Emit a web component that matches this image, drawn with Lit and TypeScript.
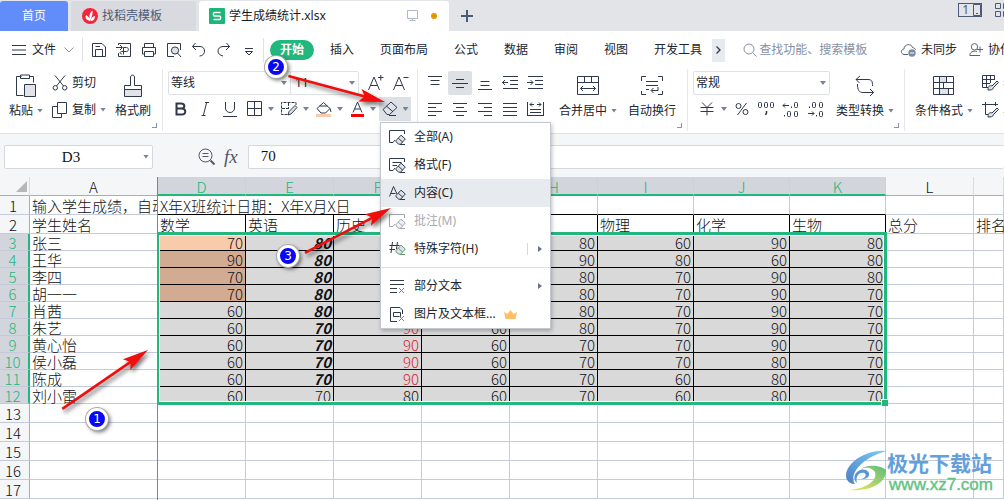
import { LitElement, html, svg, css, nothing } from "lit";
import { customElement, property } from "lit/decorators.js";
import { classMap } from "lit/directives/class-map.js";

type Glyph = { w: number; h: number; body: unknown };

const eraser = (x: number, y: number) => svg`
  <g transform="translate(${x} ${y})">
    <path d="M1 6.5 6 1.2 10.3 5 5.6 10.2H3.8L1 7.8Z" fill="#dfe2e8" />
    <path d="M3.3 4.2 7.8 8.2M5 10.5H10" />
  </g>`;

const glyphs: Record<string, Glyph> = {
  menu: { w: 14, h: 12, body: svg`<path d="M0 1.5H14M0 6H14M0 10.5H14" />` },
  chevron: { w: 10, h: 6, body: svg`<path d="M.5.5 5 5 9.5.5" stroke="#8d94a3" />` },
  save: { w: 16, h: 16, body: svg`<path d="M1.5 1.5H11L14.5 5V14.5H1.5ZM4.5 14V7.5H11.5V14M4.5 4.5H9" />` },
  exportPdf: { w: 16, h: 16, body: svg`<path d="M2.5 3V1.5H14.5V14.5H2.5V11M0 5.5H6M4 3 6.5 5.5 4 8M7.5 12.500V5.5H10.500C13 5.5 13 9.5 10.500 9.5H6C3.500 9.5 3.500 12 6 12" />` },
  print: { w: 16, h: 16, body: svg`<path d="M3.5 5V1.5H12.5V5M3.5 12H1.500V5.5H14.500V12H12.5M3.5 9.5H12.5V14.5H3.5Z" />` },
  preview: { w: 16, h: 16, body: svg`<path d="M14.5 8V1.5H1.5V14.5H8" /><circle cx="9" cy="8.5" r="3.6" fill="#dfe2e8" /><path d="m11.5 11 3.5 4" />` },
  undo: { w: 16, h: 16, body: svg`<path d="M4.5 1 1.5 4.500 5 8M1.500 4.500H9C12 4.500 13.500 6.500 13.500 9S12 14 8.500 14" />` },
  redo: { w: 16, h: 16, body: svg`<path d="M10.500 1 13.500 4.500 10 8M13.500 4.500H7C4 4.500 2 6.500 2 9S4 13.500 7 14" />` },
  more: { w: 16, h: 16, body: svg`<path d="M4 6.500H12M4.500 9.500 8 13 11.500 9.500Z" />` },
  search: { w: 14, h: 14, body: svg`<circle cx="6" cy="6" r="5" stroke="#8b93a3" /><path d="m9.500 9.500 4 4" stroke="#8b93a3" />` },
  cloud: { w: 17, h: 14, body: svg`<path d="M8 11.500H4C.500 11 .500 6.500 4 6 4 1 11.500 0 12.500 4.500 14.500 5 15.500 6 15.500 7" stroke="#5b6577" /><circle cx="12" cy="10" r="3.700" fill="#7c8aa5" stroke="none" /><path d="M10 10H14" stroke="#fff" />` },
  person: { w: 14, h: 14, body: svg`<circle cx="5.500" cy="3.800" r="3.200" stroke="#5b6577" /><path d="M8 8.500C4 7.500 1 9 .800 12.500H11M8 6.500H14M11 3.500V9.500" stroke="#5b6577" />` },
  paste: { w: 22, h: 24, body: svg`<path d="M6.500 2.500H1.500V21.500H8.500M14.500 2.500H18.500V8.500M5.500 1H14.500V4.500H5.500Z" /><path d="M9.500 10.500H20.500V22.500H9.500Z" fill="#e1e3e8" />` },
  cut: { w: 16, h: 16, body: svg`<path d="M3 .500 11.500 11M13 .500 4.500 11" /><circle cx="3.300" cy="12.800" r="2.200" /><circle cx="12.700" cy="12.800" r="2.200" />` },
  copy: { w: 16, h: 16, body: svg`<path d="M5.500 .500H14.500V11.500H5.500ZM5 4.500H.500V15.500H9.500V12" />` },
  brush: { w: 20, h: 24, body: svg`<path d="M1.500 11.500H7.500V3C7.500.500 11.500.500 11.500 3V11.500H18.500V16H1.500Z" fill="#fff" /><path d="M1.500 15.500H18.500V22.500H1.500Z" fill="#e1e3e8" />` },
  growFont: { w: 16, h: 16, body: svg`<path d="M.500 15 6 2 11.500 15M2.500 10.500H9.500M10 2.500H15.500M12.800 0V5.500" />` },
  shrinkFont: { w: 16, h: 16, body: svg`<path d="M.500 15 6 2 11.500 15M2.500 10.500H9.500M10.500 2.500H15.500" />` },
  bold: { w: 12, h: 14, body: svg`<path d="M1.500 1.500H6C10.500 1.500 10.500 6.500 6 6.500H1.500ZM1.500 6.500H6.500C11.500 6.500 11.500 12.500 6.500 12.500H1.500Z" stroke-width="2" />` },
  italic: { w: 10, h: 14, body: svg`<path d="M6.500 1 3.500 13M5 .500H9M1.500 13.500H5.500" />` },
  underline: { w: 15, h: 15, body: svg`<path d="M2.500 0V6C2.500 12 11.500 12 11.500 6V0M0 14.500H14" />` },
  borders: { w: 16, h: 16, body: svg`<path d="M.500.500H14.500V14.500H.500ZM7.500.500V14.500M.500 7.500H14.500" />` },
  drawBorder: { w: 17, h: 16, body: svg`<path d="M15 4V1.500H.500V13.500H7M7.500 2V7M1 7.500H9" stroke-dasharray="3 1" /><path d="M7 14 8 10.500 14 4.500 16 6.500 10 13Z" fill="#dfe2e8" />` },
  bucket: { w: 17, h: 17, body: svg`<path d="M2 7.500 8.500 1.500 15 7.500 10.500 12H6ZM4.500 5H12.500M15 7.500 16 11" /><path d="M1 13H16V16H1Z" fill="#f8cbad" stroke="none" />` },
  fontColor: { w: 15, h: 17, body: svg`<path d="M3 11.500 7.500 1 12 11.500M4.500 8H10.500" /><path d="M1 14.500H14" stroke="red" stroke-width="3" />` },
  eraser: { w: 16, h: 16, body: svg`<path d="M1 8.500 9 1 15 6.500 7.500 13.500H5Z" fill="#dfe2e8" /><path d="M4.500 5.200 11 10.700M7 14.500H14" />` },
  top: { w: 16, h: 16, body: svg`<path d="M1 1.500H15M3.500 5.500H12.500M3.500 9.500H12.500" />` },
  middle: { w: 16, h: 16, body: svg`<path d="M4 4.500H12M0 8.500H16M4 12.500H12" />` },
  bottom: { w: 16, h: 16, body: svg`<path d="M3.500 6.500H12.500M3.500 10.500H12.500M1 14.500H15" />` },
  outdent: { w: 17, h: 16, body: svg`<path d="M1 1.500H16M8 5.500H16M8 9.500H16M1 13.500H16M0 7.500H6M3 5 .500 7.500 3 10" />` },
  indent: { w: 17, h: 16, body: svg`<path d="M1 1.500H16M8 5.500H16M8 9.500H16M1 13.500H16M0 7.500H6M3.500 5 6 7.500 3.500 10" />` },
  left: { w: 16, h: 16, body: svg`<path d="M1 2.500H15M1 6.500H9M1 10.500H15M1 14.500H9" />` },
  center: { w: 16, h: 16, body: svg`<path d="M1 2.500H15M4 6.500H12M1 10.500H15M4 14.500H12" />` },
  right: { w: 16, h: 16, body: svg`<path d="M1 2.500H15M7 6.500H15M1 10.500H15M7 14.500H15" />` },
  justify: { w: 16, h: 16, body: svg`<path d="M1 2.500H15M1 6.500H15M1 10.500H15M1 14.500H15" />` },
  distribute: { w: 17, h: 16, body: svg`<path d="M.500 1V15M16.500 1V15M3 3.500H7M5 1.500 3 3.500 5 5.500M10 3.500H14M12 1.500 14 3.500 12 5.500M3 8.500H14M3 11.500H14M1 14.500H16" />` },
  merge: { w: 22, h: 20, body: svg`<path d="M.500.500H21.500V18.500H.500ZM.500 6.500H21.500M7.500.500V6.500M14.500.500V6.500M3.500 12.500H18.500M6 10 3.500 12.500 6 15M16 10 18.500 12.500 16 15" />` },
  wrap: { w: 22, h: 20, body: svg`<path d="M.500 5V.500H5M17 .500H21.500V5M21.500 15V18.500H17M5 18.500H.500V15M5 5.500H17M5 9.500H17M5 13.500H8M17 11V14.500H10.500M12.500 12 10 14.500 12.500 17" />` },
  yen: { w: 14, h: 14, body: svg`<path d="M2 .500 7 5.500 12 .500M.500 5.500H13.500M.500 9.500H13.500M7 5.500V13.500" />` },
  percent: { w: 14, h: 14, body: svg`<circle cx="3.500" cy="4" r="2.500" /><circle cx="10.500" cy="10" r="2.500" /><path d="M11.500 1 2.500 13" />` },
  thousands: { w: 18, h: 16, body: svg`<rect x="1.500" y="1.500" width="3" height="5" rx="1" /><rect x="7.500" y="1.500" width="3" height="5" rx="1" /><rect x="13.500" y="1.500" width="3" height="5" rx="1" /><path d="M9.500 10V12L8.500 14" stroke-width="1.500" />` },
  addDecimal: { w: 17, h: 16, body: svg`<path d="M1 4.500H7M3 2.500 1 4.500 3 6.500M9.500 5.500V7M2.500 14V15.500" /><rect x="12.500" y="1.500" width="3" height="5" rx="1" /><rect x="5.500" y="10.500" width="3" height="5" rx="1" /><rect x="12.500" y="10.500" width="3" height="5" rx="1" />` },
  cutDecimal: { w: 17, h: 16, body: svg`<path d="M1 12.500H7M5 10.500 7 12.500 5 14.500M2.500 5.500V7M9.500 14V15.500" /><rect x="5.500" y="1.500" width="3" height="5" rx="1" /><rect x="12.500" y="1.500" width="3" height="5" rx="1" /><rect x="12.500" y="10.500" width="3" height="5" rx="1" />` },
  convert: { w: 20, h: 22, body: svg`<path d="M1 4.500H13C17 4.500 17.500 6.500 17.500 11M5 1 1 4.500 4.500 8M2.500 9C2.500 15 4 17.500 8 17.500H18.500M15 14 18.500 17.500 15 21" />` },
  condition: { w: 22, h: 20, body: svg`<path d="M7 1H14V7H7ZM7 13H15V18H7Z" fill="#dfe2e8" stroke="none" /><path d="M.500.500H20.500V18.500H.500ZM.500 6.500H20.500M.500 12.500H20.500M6.500.500V18.500M13.500.500V6.500M10.500 6.500V12.500M15.500 12.500V18.500" />` },
  tableStyle: { w: 17, h: 16, body: svg`<path d="M12.500 5V.500H.500V12.500H6M.500 4.500H12.500M.500 8.500H8M4.500.500V12.500M8.500.500V8" /><path d="M6 15C6 11 8 10 10 11L15 6 16.500 7.500 11.500 12.500C11 15 9 15 6 15Z" fill="#dfe2e8" />` },
  cellStyle: { w: 17, h: 16, body: svg`<path d="M0 2.500H16M3.500 0V12.500H6M13.500 0V4" /><path d="M6 15C6 11 8 10 10 11L15 6 16.500 7.500 11.500 12.500C11 15 9 15 6 15Z" fill="#dfe2e8" />` },
  zoomOut: { w: 18, h: 18, body: svg`<circle cx="7.500" cy="7.500" r="6.500" stroke="#4e586b" /><path d="M4.500 5.500H10.500M4.500 8.500H10.500" stroke="#4e586b" /><path d="m12.500 12.500 4 4" stroke="#4e586b" stroke-width="2" />` },
  monitor: { w: 12, h: 12, body: svg`<path d="M.500.500H10.500V8.500H.500ZM5.500 8.500V10.500M2.500 10.500H8.500" stroke="#b0b8cc" />` },
  plus: { w: 12, h: 12, body: svg`<path d="M0 6H12M6 0V12" stroke="#4b5a76" stroke-width="2" />` },
  grid: { w: 14, h: 14, body: svg`<path d="M.500.500H5.500V5.500H.500ZM8.500.500H13.500V5.500H8.500ZM.500 8.500H5.500V13.500H.500ZM8.500 8.500H13.500V13.500H8.500Z" stroke="#4b5a76" />` },
  phone: { w: 8, h: 12, body: svg`<path d="M.500.500H7.500V11.500H.500ZM3 9.500H5" stroke="#4b5a76" />` },
  clearAll: { w: 17, h: 17, body: svg`<path d="M15.500 5V1.500H.500V13.500H4L6 11" />${eraser(6, 5)}` },
  clearFormat: { w: 17, h: 17, body: svg`<path d="M15.500 5V1.500H.500V13.500H4L6 11M3.500 5.500H12.500M3.500 8.500H8" />${eraser(6, 5)}` },
  clearContent: { w: 17, h: 17, body: svg`<path d="M.500 11.500 4.500 1.500 8 9M2 8.500H6.500" />${eraser(6, 4)}` },
  clearSpecial: { w: 17, h: 17, body: svg`<path d="M3.500 1 2 12M8.500 1 7.500 8M.500 4.500H10.500M.500 8.500H6" /><g stroke="#5f9a72">${eraser(6, 3)}</g>` },
  partText: { w: 17, h: 17, body: svg`<path d="M1 2.500H15M1 6.500H15M1 10.500H8M1 14.500H8" /><path class="cross" d="m10 10 5 5M15 10l-5 5" style="stroke:#d9575b" />` },
  pictureBox: { w: 17, h: 17, body: svg`<path d="M13.500 8V4L11 1.500H1.500V15.500H8M4.500 6.500H11.500V10.500H4.500Z" /><path class="cross" d="m10 10 5 5M15 10l-5 5" style="stroke:#d9575b" />` },
};

const icon = (name: string) => {
  const g = glyphs[name];
  return svg`<svg class="icon" width=${g.w} height=${g.h} viewBox="0 0 ${g.w} ${g.h}" fill="none" stroke="#2f394b" aria-hidden="true">${g.body}</svg>`;
};

const shared = css`
  :host, * { box-sizing: border-box; }
  button, select, input {
    font: inherit; color: inherit; background: none; border: 0; margin: 0; padding: 0;
    outline: 0; border-radius: 0; appearance: none;
  }
  button { display: flex; align-items: center; justify-content: center; white-space: nowrap; flex: none; }
  .icon { display: block; flex: none; }
  .caret { flex: none; width: 6px; height: 4px; background: #77839a; clip-path: polygon(0 0, 100% 0, 50% 100%); }
`;

@customElement("title-tabs")
class TitleTabs extends LitElement {
  static styles = [shared, css`
    :host { display: flex; gap: 3px; height: 31px; padding-top: 1px; background: #e2e4e8; overflow: hidden; }
    .tab { border-radius: 3px 3px 0 0; background: #d8dadf; color: #4b5a76; }
    .home { width: 68px; background: #608df9; color: #fff; }
    .docer { width: 125px; padding-left: 11px; justify-content: flex-start; gap: 4px; }
    .file { width: 250px; padding: 0 12px 0 10px; justify-content: flex-start; gap: 4px; background: #fff; color: #171b22; }
    .name { flex: 1; text-align: left; }
    .dot { width: 6px; height: 6px; margin-left: 8px; border-radius: 50%; background: #e69500; }
    .add { width: 29px; }
    .tools { display: flex; gap: 13px; margin: 2px -5px 0 auto; }
    .count { display: flex; align-items: center; justify-content: flex-end; gap: 4px; width: 24px; height: 14px; border: 1px solid #4b5a76; color: #4b5a76; }
  `];
  render() {
    return html`
      <button class="tab home">首页</button>
      <button class="tab docer">
        <svg width="16" height="16" viewBox="0 0 16 16"><circle cx="8" cy="8" r="8" fill="#f5243c" /><path d="M8 13C4 12 3 10 4 7 6 8 8 10 8 13ZM8 13C7 9 7 5 10.500 2.500 11 5 10 9 8 13ZM8.500 13C9 10 10.500 8.500 13 8 13 11 11.500 13 8.500 13Z" fill="#fff" /></svg>
        找稻壳模板
      </button>
      <button class="tab file">
        <svg width="16" height="16" viewBox="0 0 16 16"><rect width="16" height="16" rx="1" fill="#1eb57a" /><path d="M11.500 4.500H5.500C4 4.500 4 8 5.500 8H10.500C12 8 12 11.500 10.500 11.500H4.500" fill="none" stroke="#fff" stroke-width="1.500" /></svg>
        <span class="name">学生成绩统计.xlsx</span>
        ${icon("monitor")}<span class="dot"></span>
      </button>
      <button class="add" aria-label="新建">${icon("plus")}</button>
      <div class="tools"><button class="count">1${icon("phone")}</button>${icon("grid")}</div>`;
  }
}

@customElement("menu-bar")
class MenuBar extends LitElement {
  static styles = [shared, css`
    :host { display: flex; align-items: center; height: 38px; padding-left: 12px; background: #fff; overflow: hidden; }
    .file { gap: 6px; }
    .file .icon:last-child { margin-left: 2px; }
    .rule { flex: none; width: 1px; height: 24px; background: #dfe1e6; margin: 0 8px; }
    .quick { display: flex; gap: 9px; margin-right: -2px; }
    .pages { display: flex; align-items: center; gap: 26px; }
    .start { height: 20px; width: 44px; margin: 0 -10px 0 -2px; border-radius: 10px; background: #22b77d; color: #fff; font-weight: 700; }
    .next { width: 13px; height: 23px; margin: 0 18px 0 10px; background: #e7eaee; }
    .search { display: flex; align-items: center; gap: 2px; flex: 1; min-width: 60px; }
    .search input { width: 120px; }
    .search input::placeholder { color: #8690a1; opacity: 1; }
    .state { gap: 4px; margin-right: 12px; }
    .share { gap: 5px; margin-right: -8px; }
  `];
  render() {
    return html`
      <button class="file">${icon("menu")}文件${icon("chevron")}</button>
      <span class="rule"></span>
      <div class="quick">
        ${["save", "exportPdf", "print", "preview", "undo", "redo", "more"].map((n) => html`<button aria-label=${n}>${icon(n)}</button>`)}
      </div>
      <span class="rule"></span>
      <nav class="pages">
        <button class="start">开始</button>
        ${["插入", "页面布局", "公式", "数据", "审阅", "视图", "开发工具"].map((n) => html`<button>${n}</button>`)}
      </nav>
      <button class="next" aria-label="更多选项卡"><svg class="icon" width="5" height="8" fill="none" stroke="#2f394b"><path d="M.500.500 4 4 .500 7.500" stroke-width="1.300" /></svg></button>
      <label class="search">${icon("search")}<input placeholder="查找功能、搜索模板" aria-label="查找功能" /></label>
      <button class="state">${icon("cloud")}未同步</button>
      <button class="share">${icon("person")}协作</button>`;
  }
}

@customElement("clear-menu")
class ClearMenu extends LitElement {
  static styles = [shared, css`
    :host { display: block; width: 171px; border: 1px solid #c3c7ce; background: #fff; box-shadow: 1px 2px 4px rgb(0 0 0 / 25%); }
    .item { width: 100%; height: 28px; padding: 0 8px; gap: 8px; justify-content: flex-start; color: #20262f; }
    .active { background: #e7eaee; }
    .off { color: #a9abb0; }
    .off .icon { opacity: 0.45; }
    .more { margin-left: auto; width: 4px; height: 6px; background: #65718a; clip-path: polygon(0 0, 100% 50%, 0 100%); }
    .split { margin-left: auto; height: 12px; border-left: 1px solid #d5d8dd; }
    .split + .more { margin-left: 2px; }
    .rule { height: 1px; margin: 4px 0; border: 0; background: #dcdfe4; }
  `];
  render() {
    const item = (glyph: string, label: string, cls = "", tail: unknown = nothing) =>
      html`<button role="menuitem" class="item ${cls}" ?disabled=${cls === "off"}>${icon(glyph)}<span>${label}</span>${tail}</button>`;
    const more = html`<i class="more"></i>`;
    return html`
      ${item("clearAll", "全部(A)")}
      ${item("clearFormat", "格式(F)")}
      ${item("clearContent", "内容(C)", "active")}
      ${item("clearAll", "批注(M)", "off")}
      ${item("clearSpecial", "特殊字符(H)", "", html`<i class="split"></i>${more}`)}
      <hr class="rule" />
      ${item("partText", "部分文本", "", more)}
      ${item("pictureBox", "图片及文本框...", "", html`<svg class="icon" width="13" height="11"><path d="M0 3 3.500 5 6.500 1 9.500 5 13 3 11.500 10H1.500Z" fill="#ffbf66" /></svg>`)}`;
  }
}

@customElement("ribbon-bar")
class RibbonBar extends LitElement {
  static styles = [shared, css`
    :host { display: flex; height: 64px; background: #fff; }
    .group { position: relative; display: flex; flex: none; height: 62px; border-right: 1px solid #e6e8eb; }
    .launch { position: absolute; right: 5px; bottom: 3px; width: 5px; height: 5px; border: solid #8a94a8; border-width: 0 1px 1px 0; }
    .big { display: grid; grid-template-rows: 33px 17px; justify-items: center; align-content: start; align-items: center; }
    .label { display: flex; align-items: center; gap: 4px; }
    .clip { width: 163px; padding-left: 9px; gap: 9px; }
    .pair { display: grid; grid-template-rows: 27px 27px; align-content: start; justify-items: start; align-items: center; }
    .pair button { gap: 4px; }
    .font { width: 255px; padding-left: 5px; }
    .cells { width: 270px; padding-left: 5px; gap: 11px; }
    .number { width: 217px; padding-left: 5px; gap: 6px; }
    .styles { border: 0; padding-left: 10px; gap: 9px; }
    .stack { display: flex; flex-direction: column; }
    .line { display: flex; align-items: center; height: 24px; margin-top: 2px; }
    .select { position: relative; display: flex; align-items: center; height: 24px; border: 1px solid #dfe1e5; border-radius: 2px; }
    .select select { width: 100%; height: 100%; padding-left: 2px; }
    .select .caret { position: absolute; right: 3px; }
    .family { width: 123px; }
    .size { width: 69px; margin-left: -1px; }
    .size select { padding-left: 4px; }
    .format { width: 137px; }
    .resize { margin-left: 9px; }
    .tools { display: grid; grid-template-columns: 25px 23px 24px 34px 34px 35px 29px 32px; padding-left: 7px; justify-items: start; }
    .tools button { gap: 5px; }
    .clear { position: relative; }
    .clear > button { width: 32px; height: 24px; background: #dde1e6; }
    .clear clear-menu { position: absolute; z-index: 5; top: 25px; left: 1px; }
    .aligns { display: grid; grid-template-columns: repeat(5, 25px); grid-auto-rows: 26px; align-items: center; margin-top: 1px; }
    .aligns button { height: 24px; width: 24px; }
    .on { background: #dde1e6; border-radius: 2px; }
    .formats { padding: 0 6px 0 7px; justify-content: space-between; }
    .formats button { gap: 7px; }
  `];

  private big(glyph: string, label: string, caret = true) {
    return html`<button class="big">${icon(glyph)}<span class="label">${label}${caret ? html`<i class="caret"></i>` : nothing}</span></button>`;
  }
  private tool(glyph: string, caret = false) {
    return html`<button aria-label=${glyph}>${icon(glyph)}${caret ? html`<i class="caret"></i>` : nothing}</button>`;
  }
  private pick(cls: string, label: string, value: string) {
    return html`<div class="select ${cls}"><select aria-label=${label}><option>${value}</option></select><i class="caret"></i></div>`;
  }

  render() {
    const aligns = ["top", "middle", "bottom", "outdent", "indent", "left", "center", "right", "justify", "distribute"];
    return html`
      <section class="group clip">
        ${this.big("paste", "粘贴")}
        <div class="pair">
          <button>${icon("cut")}剪切</button>
          <button>${icon("copy")}复制<i class="caret"></i></button>
        </div>
        ${this.big("brush", "格式刷", false)}
        <i class="launch"></i>
      </section>
      <section class="group font">
        <div class="stack">
          <div class="line">
            ${this.pick("family", "字体", "等线")}${this.pick("size", "字号", "11")}
            <button class="resize" aria-label="增大字号">${icon("growFont")}</button>
            <button class="resize" aria-label="减小字号">${icon("shrinkFont")}</button>
          </div>
          <div class="line tools">
            ${this.tool("bold")}${this.tool("italic")}${this.tool("underline")}${this.tool("borders", true)}
            ${this.tool("drawBorder", true)}${this.tool("bucket", true)}${this.tool("fontColor", true)}
            <div class="clear">${this.tool("eraser", true)}<clear-menu role="menu"></clear-menu></div>
          </div>
        </div>
      </section>
      <section class="group cells">
        <div class="aligns">
          ${aligns.map((n) => html`<button class=${classMap({ on: n === "middle" })} aria-label=${n}>${icon(n)}</button>`)}
        </div>
        ${this.big("merge", "合并居中")}
        ${this.big("wrap", "自动换行", false)}
        <i class="launch"></i>
      </section>
      <section class="group number">
        <div class="stack">
          <div class="line">${this.pick("format", "数字格式", "常规")}</div>
          <div class="line formats">
            ${this.tool("yen", true)}${this.tool("percent")}${this.tool("thousands")}${this.tool("addDecimal")}${this.tool("cutDecimal")}
          </div>
        </div>
        ${this.big("convert", "类型转换")}
        <i class="launch"></i>
      </section>
      <section class="group styles">
        ${this.big("condition", "条件格式")}
        <div class="pair">
          <button>${icon("tableStyle")}表格样式</button>
          <button>${icon("cellStyle")}单元格样式</button>
        </div>
      </section>`;
  }
}

@customElement("formula-bar")
class FormulaBar extends LitElement {
  static styles = [shared, css`
    :host { display: flex; align-items: center; height: 44px; padding: 2px 0 0 4px; border-top: 1px solid #dfe1e5; background: #f5f6f8; }
    .name, .value { height: 24px; border: 1px solid #d6d8dd; border-radius: 2px; background: #fff; font-family: "Liberation Serif", serif; font-size: 15px; color: #111; }
    .name { display: flex; align-items: center; flex: none; width: 149px; padding-right: 3px; margin-right: 45px; }
    .name input { flex: 1; min-width: 0; padding-right: 6px; text-align: center; }
    .fx { margin: 0 10px 0 8px; font: italic 19px/20px "Liberation Serif", serif; color: #4e586b; }
    .value { flex: 1; min-width: 0; padding-left: 12px; border-right: 0; }
  `];
  render() {
    return html`
      <div class="name"><input aria-label="名称框" value="D3" /><i class="caret"></i></div>
      ${icon("zoomOut")}<button class="fx">fx</button>
      <input class="value" aria-label="编辑栏" value="70" />`;
  }
}

const columns = ["A", "D", "E", "F", "G", "H", "I", "J", "K", "L", ""];
const titles = ["学生姓名", "数学", "英语", "历史", "", "", "物理", "化学", "生物", "总分", "排名"];
const people: [string, string[]][] = [
  ["张三", ["70", "80", "", "", "80", "60", "90", "80"]],
  ["王华", ["90", "80", "", "", "90", "80", "60", "80"]],
  ["李四", ["70", "80", "", "", "80", "70", "90", "80"]],
  ["胡一一", ["70", "80", "", "", "80", "70", "90", "70"]],
  ["肖茜", ["60", "80", "", "", "80", "70", "90", "70"]],
  ["朱艺", ["60", "70", "90", "60", "80", "70", "90", "70"]],
  ["黄心怡", ["60", "70", "90", "60", "70", "70", "90", "70"]],
  ["侯小磊", ["60", "70", "90", "60", "70", "70", "80", "70"]],
  ["陈成", ["60", "70", "90", "60", "70", "60", "80", "70"]],
  ["刘小雷", ["60", "70", "80", "60", "70", "60", "80", "70"]],
];

@customElement("score-sheet")
class ScoreSheet extends LitElement {
  static styles = [shared, css`
    :host { position: relative; display: block; background: #fff; color: #111; font-size: 15px; font-weight: 300; font-family: "Noto Sans CJK SC", sans-serif; }
    table { width: 100%; table-layout: fixed; border-collapse: separate; border-spacing: 0; }
    .w-row { width: 30px; }
    .w-name { width: 128px; }
    .w-mid { width: 88px; }
    .w-wide { width: 96px; }
    th, td { padding: 0; font-weight: inherit; border: solid #c5cadb; border-width: 0 1px 1px 0; text-align: left; }
    .t { height: 18px; line-height: 18px; padding: 1px 2px 0; white-space: nowrap; }
    .data .t { height: 16px; line-height: 16px; }
    .head th { background: #f5f6f8; text-align: center; border-color: #d9dce3 #d9dce3 #a3adc4; }
    .head .sel { background: #d2d5dc; color: #22b77d; border-right-color: #cbd0da; border-bottom: 2px solid #22b77d; }
    .head .sel .t { height: 17px; line-height: 18px; }
    .corner .t { display: flex; justify-content: flex-end; align-items: flex-end; padding-bottom: 3px; }
    .corner i { width: 11px; height: 11px; background: #b7b7b7; clip-path: polygon(100% 0, 100% 100%, 0 100%); }
    .no { background: #f5f6f8; text-align: center; border-right-color: #a3adc4; }
    .no .t { padding: 1px 3px 0 0; }
    .data .no { background: #d2d5dc; color: #22b77d; border-right: 2px solid #22b77d; }
    .cut { overflow: hidden; }
    .under { border-bottom-color: #000; }
    .dark { border-color: #000; }
    .num { background: #d9d9d9; text-align: right; border-color: #000; }
    .peach { background: #f8cbad; }
    .tan { background: #d1ac92; }
    .strong { font-weight: 700; font-style: italic; }
    .red { color: #e0222a; }
    .freeze { position: absolute; left: 157px; top: 0; bottom: 0; width: 1px; background: #22b77d; }
    .range { position: absolute; left: 157px; top: 55px; width: 730px; height: 173px; border: 3px solid #22b77d; border-left-width: 2px; box-shadow: inset 0 0 0 1px #fff; }
    .handle { position: absolute; right: -4px; bottom: -4px; width: 7px; height: 7px; background: #22b77d; border: 1px solid #fff; border-width: 1px 0 0 1px; }
  `];

  private cell(cls: string, text: string) {
    return html`<td class=${cls}><div class="t">${text}</div></td>`;
  }
  private no(n: number) {
    return html`<th class="no" scope="row"><div class="t">${n}</div></th>`;
  }
  private tone(r: number, c: number) {
    if (c === 0 && r < 4) return r === 0 ? "peach" : "tan";
    if (c === 1 && r < 9) return "strong";
    return c === 2 && r < 9 ? "red" : "";
  }

  render() {
    return html`
      <table>
        <colgroup>
          <col class="w-row" /><col class="w-name" />
          ${[0, 1, 2, 3, 4].map(() => html`<col class="w-mid" />`)}
          ${[0, 1, 2].map(() => html`<col class="w-wide" />`)}
          <col class="w-mid" /><col />
        </colgroup>
        <thead>
          <tr class="head">
            <th class="corner"><div class="t"><i></i></div></th>
            ${columns.map((c, i) => html`<th scope="col" class=${i > 0 && i < 9 ? "sel" : ""}><div class="t">${c}</div></th>`)}
          </tr>
        </thead>
        <tbody>
          <tr>
            ${this.no(1)}
            <td><div class="t cut">输入学生成绩，自动计算</div></td>
            <td class="under" colspan="3"><div class="t">X年X班统计日期：X年X月X日</div></td>
            ${titles.slice(4).map((_, i) => this.cell(i < 5 ? "under" : "", ""))}
          </tr>
          <tr>${this.no(2)}${titles.map((t, i) => this.cell(i > 0 && i < 9 ? "dark" : "", t))}</tr>
          ${people.map(([name, scores], r) => html`
            <tr class="data">
              ${this.no(r + 3)}${this.cell("", name)}
              ${scores.map((s, c) => this.cell("num " + this.tone(r, c), s))}
              ${this.cell("", "")}${this.cell("", "")}
            </tr>`)}
          ${[13, 14, 15, 16, 17].map((n) => html`<tr>${this.no(n)}${titles.map(() => this.cell("", ""))}</tr>`)}
        </tbody>
      </table>
      <div class="freeze"></div>
      <div class="range"><i class="handle"></i></div>`;
  }
}

@customElement("step-marks")
class StepMarks extends LitElement {
  static styles = [shared, css`
    :host { position: absolute; inset: 0; z-index: 10; pointer-events: none; overflow: hidden; }
    .arrows { position: absolute; left: 0; top: 0; width: 100%; height: 100%; filter: drop-shadow(2px 3px 2px rgb(0 0 0 / 55%)); }
    .badge { position: absolute; width: 22px; height: 22px; margin: -11px 0 0 -11px; border: 3px solid #fff; border-radius: 50%; background: #0808f5; box-shadow: 0 0 0 1px #aaa, 2px 2px 4px rgb(0 0 0 / 60%); color: #fff; font: 12px/16px "DejaVu Sans", sans-serif; text-align: center; }
  `];
  @property({ attribute: false }) steps = [
    { n: 1, x: 97, y: 419, tipX: 148, tipY: 350, turn: -34.5, len: 104 },
    { n: 2, x: 276, y: 67, tipX: 385, tipY: 102, turn: 15, len: 100 },
    { n: 3, x: 288, y: 256, tipX: 391, tipY: 208, turn: -27.5, len: 97 },
  ];
  render() {
    return html`
      <svg class="arrows">
        ${this.steps.map((s) => svg`<g transform="translate(${s.tipX} ${s.tipY}) rotate(${s.turn})">
          <path d="M${-s.len} 0H-18" stroke="#f20d0d" stroke-width="2.600" />
          <path d="M0 0-26-6.500-21 0-26 6.500Z" fill="#f20d0d" /></g>`)}
      </svg>
      ${this.steps.map((s) => html`<div class="badge" style="left:${s.x}px;top:${s.y}px">${s.n}</div>`)}`;
  }
}

@customElement("site-mark")
class SiteMark extends LitElement {
  static styles = css`
    :host { position: absolute; right: 11px; bottom: 6px; z-index: 4; display: flex; align-items: flex-start; font-family: "Noto Sans CJK SC", sans-serif; }
    .name { font-size: 21px; line-height: 25px; font-weight: 700; color: #62a0dc; }
    .url { font: 17px/19px "Liberation Sans", sans-serif; color: #5fc384; padding-left: 2px; -webkit-text-stroke: 0.4px #5fc384; }
  `;
  render() {
    return html`
      <svg width="42" height="42" viewBox="0 0 42 42">
        <defs>
          <linearGradient id="b" x1="0" y1="1" x2="1" y2="0"><stop offset="0" stop-color="#4c7ec4" /><stop offset="1" stop-color="#7ccff7" /></linearGradient>
          <linearGradient id="g" x1="0" y1="1" x2="1" y2="0"><stop offset="0" stop-color="#f0ea5a" /><stop offset="1" stop-color="#5cbb7d" /></linearGradient>
        </defs>
        <path d="M42 1C22-1 2 12 1 25 1 31 5 34 10 34 3 24 18 7 42 1Z" fill="url(#b)" />
        <path d="M16 19C22 14 36 15 41 20 42 32 26 42 4 40 18 39 33 32 30 22 26 17 21 17 16 19Z" fill="url(#g)" />
        <path d="M12 33C5 26 14 17 21 20 27 23 24 30 16 29 21 28 22 24 19 23 14 22 10 27 12 33Z" fill="#5b97d6" />
      </svg>
      <div><div class="name">极光下载站</div><div class="url">www.xz7.com</div></div>`;
  }
}

@customElement("app-root")
class AppRoot extends LitElement {
  static styles = css`
    :host { position: relative; display: flex; flex-direction: column; height: 100vh; overflow: hidden; background: #fff; color: #20262f; font: 12px/16px "Noto Sans", "Noto Sans CJK SC", sans-serif; }
    title-tabs, menu-bar, ribbon-bar, formula-bar { flex: none; }
    ribbon-bar { position: relative; z-index: 5; }
    score-sheet { flex: 1; min-height: 0; overflow: hidden; }
  `;
  render() {
    return html`
      <title-tabs></title-tabs>
      <menu-bar></menu-bar>
      <ribbon-bar></ribbon-bar>
      <formula-bar></formula-bar>
      <score-sheet></score-sheet>
      <site-mark></site-mark>
      <step-marks></step-marks>`;
  }
}
